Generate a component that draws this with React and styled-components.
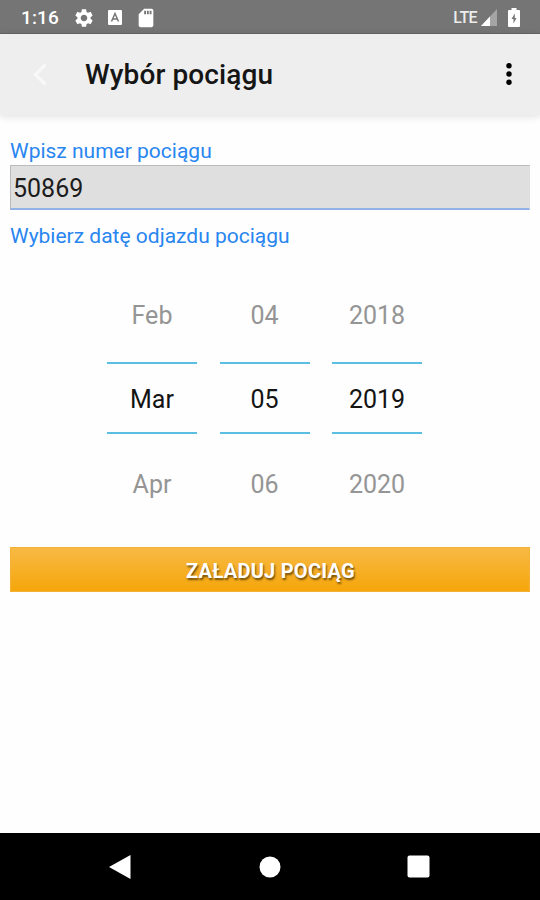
import React, { useState } from "react";
import styled, { createGlobalStyle } from "styled-components";
import { MdSettings, MdSdCard } from "react-icons/md";

const GlobalStyle = createGlobalStyle`
  * {
    box-sizing: border-box;
  }
  body {
    margin: 0;
    font-family: Roboto, sans-serif;
    background-color: #fefefe;
  }
`;

const StyledScreen = styled.div`
  display: flex;
  flex-direction: column;
  width: 540px;
  height: 900px;
  overflow: hidden;
`;

const StyledStatusBar = styled.div`
  display: flex;
  justify-content: space-between;
  align-items: center;
  height: 34px;
  padding: 2px 20px 0 21px;
  color: #fff;
  background-color: #757575;
  border-bottom: 1px solid #666;
`;

const StyledStatusGroup = styled.div`
  display: flex;
  align-items: center;
`;

const StyledClock = styled.span`
  width: 52px;
  font-size: 19px;
  font-weight: 500;
  line-height: 22px;
  letter-spacing: 0.1px;
`;

const StyledSettingsIcon = styled(MdSettings)`
  font-size: 22px;
  margin-right: 13px;
`;

const StyledSdIcon = styled(MdSdCard)`
  font-size: 22px;
  margin-left: 13px;
`;

const StyledNetwork = styled.span`
  font-size: 16px;
  font-weight: 500;
  line-height: 20px;
  letter-spacing: -0.6px;
  color: #ececec;
  margin-right: 4px;
`;

const StyledBatteryIcon = styled.svg`
  margin-left: 11px;
`;

const StyledHeader = styled.header`
  display: flex;
  align-items: center;
  height: 81px;
  padding: 0 25px 0 33px;
  background-color: #eee;
  box-shadow: 0 1px 8px rgba(0, 0, 0, 0.14);
`;

const StyledTitle = styled.h1`
  flex: 1;
  margin: 0 0 0 38px;
  padding-top: 1px;
  font-size: 28px;
  font-weight: 500;
  line-height: 32px;
  letter-spacing: 0.1px;
  color: #151515;
`;

const StyledIconButton = styled.button`
  display: flex;
  padding: 0;
  border: none;
  background: none;
  cursor: pointer;
`;

const StyledContent = styled.main`
  display: flex;
  flex: 1;
  flex-direction: column;
  padding: 24px 10px 0;
`;

const StyledLabel = styled.label`
  height: 26px;
  font-size: 21px;
  line-height: 24px;
  color: #2986f0;
`;

const StyledInput = styled.input`
  width: 100%;
  height: 45px;
  margin-bottom: 14px;
  padding: 2px 2px 0;
  border: 1px solid #bbb;
  border-right-color: #ddd;
  border-bottom: 2px solid #8fb3e6;
  border-radius: 0;
  font: 400 25px/30px Roboto, sans-serif;
  color: #1c1c1c;
  background-color: #dfdfdf;
  &:focus {
    outline: none;
  }
`;

const StyledDatePicker = styled.div`
  display: flex;
  justify-content: center;
  gap: 22.5px;
  margin-top: 28px;
  padding-right: 11px;
`;

const StyledColumn = styled.div`
  display: flex;
  flex-direction: column;
  width: 90px;
  text-align: center;
  font-size: 25px;
`;

const StyledOption = styled.div`
  height: 84px;
  line-height: 76px;
  color: #959595;
  cursor: pointer;
  &:last-child {
    line-height: 100px;
  }
`;

const StyledSelected = styled.div`
  height: 72px;
  margin-bottom: 1px;
  border-top: 2px solid #5bbfe2;
  border-bottom: 2px solid #5bbfe2;
  line-height: 72px;
  color: #141414;
`;

const StyledLoadButton = styled.button`
  height: 45px;
  margin-top: 28px;
  padding: 2px 0 0 1px;
  border: 1px solid #f3b137;
  font: 700 20px/24px Roboto, sans-serif;
  letter-spacing: 0.25px;
  color: #fff;
  text-shadow: 1px 2px 2px rgba(70, 45, 0, 0.75);
  background-image: linear-gradient(#f8ba45, #f5a60a);
  cursor: pointer;
`;

const StyledNavBar = styled.nav`
  display: flex;
  justify-content: space-between;
  align-items: center;
  height: 67px;
  padding: 0 110px 0 109px;
  background-color: #000;
`;

const columns = [
  { name: "month", values: ["Feb", "Mar", "Apr"] },
  { name: "day", values: ["04", "05", "06"] },
  { name: "year", values: ["2018", "2019", "2020"] },
];

function StatusBar() {
  return (
    <StyledStatusBar>
      <StyledStatusGroup>
        <StyledClock>1:16</StyledClock>
        <StyledSettingsIcon />
        <svg width="14" height="15" viewBox="0 0 14 15">
          <rect width="14" height="15" rx="1" fill="#fff" />
          <path
            d="M3.5 11.5 7 3.5l3.5 8M4.8 9h4.4"
            fill="none"
            stroke="#757575"
            strokeWidth="1.5"
          />
        </svg>
        <StyledSdIcon />
      </StyledStatusGroup>
      <StyledStatusGroup>
        <StyledNetwork>LTE</StyledNetwork>
        <svg width="16" height="17" viewBox="0 0 16 17">
          <path d="M16 0v17H0z" fill="#a5a5a5" />
          <path d="M9 7.5V17H0z" fill="#fff" />
        </svg>
        <StyledBatteryIcon width="12" height="20" viewBox="0 0 12 20">
          <path
            d="M3.5 0h5v2H11q1 0 1 1v15q0 1-1 1H1q-1 0-1-1V3q0-1 1-1h2.5z"
            fill="#fff"
          />
          <path d="M6.8 5.5 3.5 11h2v4.5L8.5 10H6.8z" fill="#757575" />
        </StyledBatteryIcon>
      </StyledStatusGroup>
    </StyledStatusBar>
  );
}

function NavBar() {
  return (
    <StyledNavBar>
      <svg width="22" height="24" viewBox="0 0 22 24">
        <path d="M21.5 0v24L0 12z" fill="#fff" />
      </svg>
      <svg width="24" height="22" viewBox="0 0 24 22">
        <circle cx="13" cy="11" r="10.5" fill="#fff" />
      </svg>
      <svg width="23" height="23" viewBox="0 0 23 23">
        <rect x="0.5" y="0.5" width="22" height="22" rx="2" fill="#fff" />
      </svg>
    </StyledNavBar>
  );
}

export default function App() {
  const [trainNumber, setTrainNumber] = useState("50869");

  const handleTrainNumber = (e) => {
    setTrainNumber(e.target.value);
  };

  return (
    <StyledScreen>
      <GlobalStyle />
      <StatusBar />
      <StyledHeader>
        <StyledIconButton>
          <svg width="14" height="24" viewBox="0 0 14 24">
            <path
              d="M12.5 1.5 2.5 11.5l10 10"
              fill="none"
              stroke="#f8f8f8"
              strokeWidth="3.5"
            />
          </svg>
        </StyledIconButton>
        <StyledTitle>Wybór pociągu</StyledTitle>
        <StyledIconButton>
          <svg width="12" height="24" viewBox="0 0 12 24">
            <circle cx="6" cy="2.8" r="2.7" />
            <circle cx="6" cy="11" r="2.7" />
            <circle cx="6" cy="19.3" r="2.7" />
          </svg>
        </StyledIconButton>
      </StyledHeader>
      <StyledContent>
        <StyledLabel htmlFor="train">Wpisz numer pociągu</StyledLabel>
        <StyledInput
          id="train"
          value={trainNumber}
          onChange={handleTrainNumber}
        />
        <StyledLabel>Wybierz datę odjazdu pociągu</StyledLabel>
        <StyledDatePicker>
          {columns.map((column) => (
            <StyledColumn key={column.name}>
              <StyledOption>{column.values[0]}</StyledOption>
              <StyledSelected>{column.values[1]}</StyledSelected>
              <StyledOption>{column.values[2]}</StyledOption>
            </StyledColumn>
          ))}
        </StyledDatePicker>
        <StyledLoadButton>ZAŁADUJ POCIĄG</StyledLoadButton>
      </StyledContent>
      <NavBar />
    </StyledScreen>
  );
}
